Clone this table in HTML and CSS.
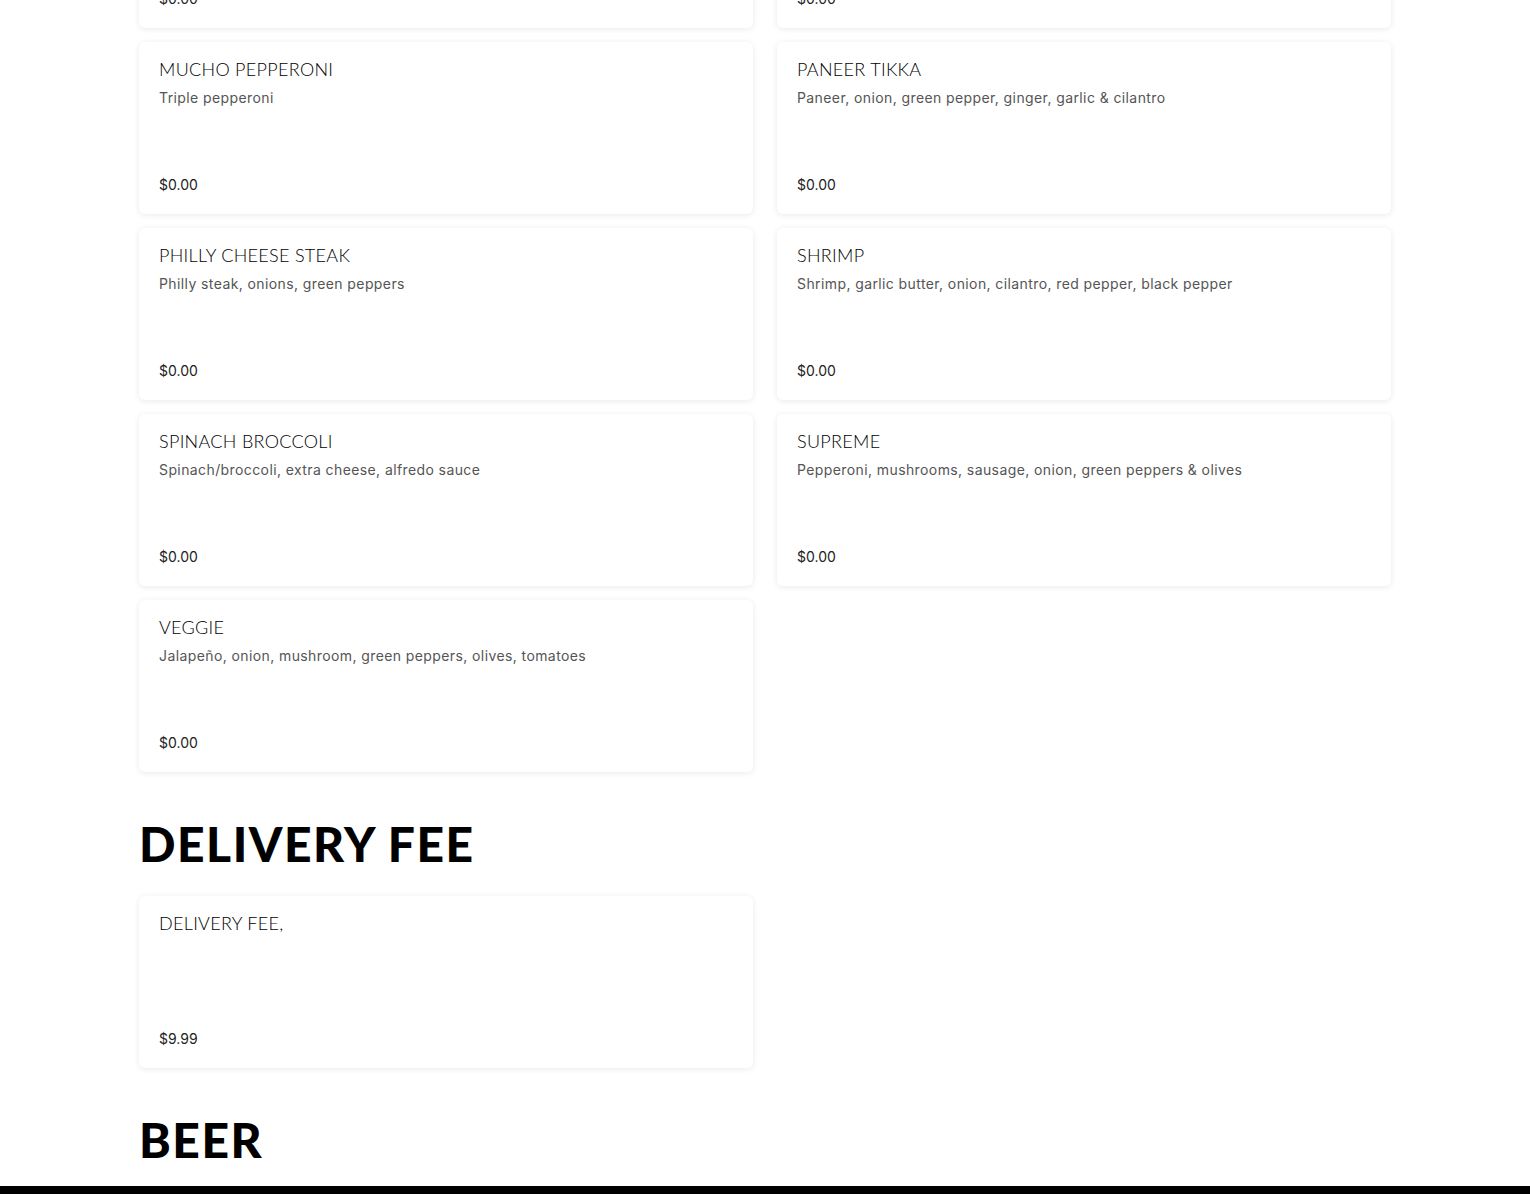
FILE: index.html
```html
<!DOCTYPE html>
<html>
<head>
<meta charset="utf-8">
<link rel="stylesheet" href="styles.css">
</head>
<body>
<main class="menu">
  <section class="grid grid-first">
    <article class="card"><h3 class="name">MARGHERITA</h3><p class="desc">Fresh mozzarella, basil, tomato sauce</p><p class="price">$0.00</p></article>
    <article class="card"><h3 class="name">MEAT LOVERS</h3><p class="desc">Pepperoni, sausage, ham, bacon</p><p class="price">$0.00</p></article>
    <article class="card"><h3 class="name">MUCHO PEPPERONI</h3><p class="desc">Triple pepperoni</p><p class="price">$0.00</p></article>
    <article class="card"><h3 class="name">PANEER TIKKA</h3><p class="desc">Paneer, onion, green pepper, ginger, garlic &amp; cilantro</p><p class="price">$0.00</p></article>
    <article class="card"><h3 class="name">PHILLY CHEESE STEAK</h3><p class="desc">Philly steak, onions, green peppers</p><p class="price">$0.00</p></article>
    <article class="card"><h3 class="name">SHRIMP</h3><p class="desc">Shrimp, garlic butter, onion, cilantro, red pepper, black pepper</p><p class="price">$0.00</p></article>
    <article class="card"><h3 class="name">SPINACH BROCCOLI</h3><p class="desc">Spinach/broccoli, extra cheese, alfredo sauce</p><p class="price">$0.00</p></article>
    <article class="card"><h3 class="name">SUPREME</h3><p class="desc">Pepperoni, mushrooms, sausage, onion, green peppers &amp; olives</p><p class="price">$0.00</p></article>
    <article class="card"><h3 class="name">VEGGIE</h3><p class="desc">Jalapeño, onion, mushroom, green peppers, olives, tomatoes</p><p class="price">$0.00</p></article>
  </section>

  <h2 class="section-title">DELIVERY FEE</h2>
  <section class="grid">
    <article class="card"><h3 class="name">DELIVERY FEE,</h3><p class="desc"></p><p class="price">$9.99</p></article>
  </section>

  <h2 class="section-title section-beer">BEER</h2>
</main>
<footer class="footer-bar"></footer>
</body>
</html>
```

FILE: styles.css
```css
html, body {
  margin: 0;
  padding: 0;
  background: #ffffff;
  overflow: hidden;
}

body {
  height: 1194px;
  position: relative;
}

.menu {
  width: 1252px;
  margin: 0 0 0 139px;
}

.grid {
  display: grid;
  grid-template-columns: 614px 614px;
  column-gap: 24px;
  row-gap: 14px;
}

.grid-first {
  margin-top: -144px;
}

.card {
  height: 172px;
  box-sizing: border-box;
  padding: 15px 20px 19px 20px;
  background: #fff;
  border-radius: 6px;
  box-shadow: 0 1px 6px rgba(0, 0, 0, 0.09);
  display: flex;
  flex-direction: column;
}

.name {
  margin: 0;
  font-family: "Lato", "DejaVu Sans", sans-serif;
  font-weight: 300;
  font-size: 18px;
  line-height: 24px;
  letter-spacing: 0.3px;
  color: #000;
}

.desc {
  margin: 7px 0 0 0;
  font-family: "Inter", "Noto Sans", sans-serif;
  font-size: 14px;
  line-height: 20px;
  letter-spacing: 0.4px;
  color: #555;
}

.desc:empty {
  min-height: 20px;
}

.price {
  margin: auto 0 0 0;
  font-family: "Inter", "Noto Sans", sans-serif;
  font-size: 14px;
  line-height: 20px;
  color: #222;
}

.section-title {
  margin: 42px 0 22px 0;
  font-family: "Lato", "DejaVu Sans", sans-serif;
  font-weight: 900;
  font-size: 48px;
  line-height: 60px;
  letter-spacing: 1.5px;
  color: #000;
}

.section-beer {
  margin-top: 42px;
}

.footer-bar {
  position: absolute;
  left: 0;
  right: 0;
  top: 1186px;
  height: 8px;
  background: #000;
}
```
